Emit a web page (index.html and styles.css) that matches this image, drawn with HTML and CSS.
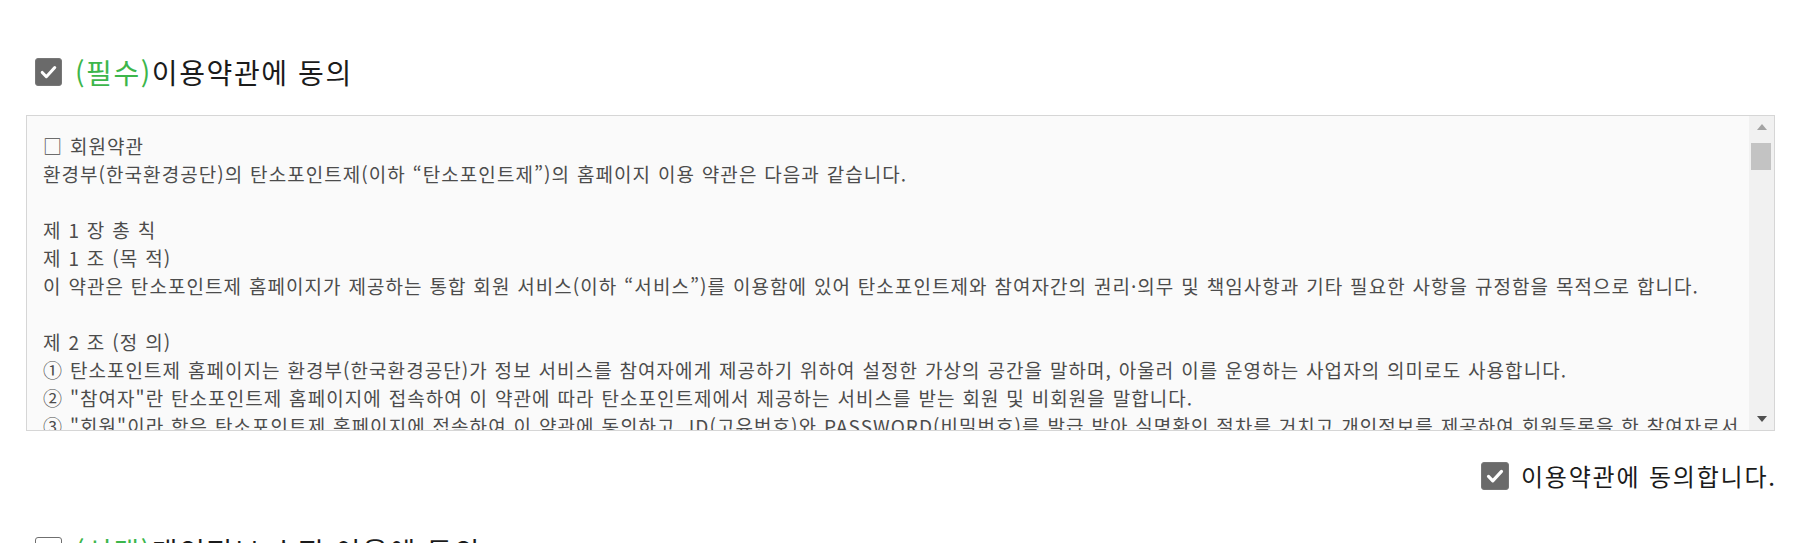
FILE: index.html
```html
<!DOCTYPE html>
<html lang="ko">
<head>
<meta charset="utf-8">
<title>이용약관 동의</title>
<link rel="stylesheet" href="styles.css">
</head>
<body>
  <section class="terms-section">
    <h3 class="agree-title">
      <span class="check is-checked">
        <svg viewBox="0 0 28 28" aria-hidden="true"><path d="M7 14.5l4.6 4.8L21 9"/></svg>
      </span>
      <span><em class="req">(필수)</em>이용약관에 동의</span>
    </h3>
    <div class="terms-box">
      <div class="terms-text">
        <p>□ 회원약관</p>
        <p>환경부(한국환경공단)의 탄소포인트제(이하 “탄소포인트제”)의 홈페이지 이용 약관은 다음과 같습니다.</p>
        <p class="blank"></p>
        <p>제 1 장 총 칙</p>
        <p>제 1 조 (목 적)</p>
        <p>이 약관은 탄소포인트제 홈페이지가 제공하는 통합 회원 서비스(이하 “서비스”)를 이용함에 있어 탄소포인트제와 참여자간의 권리·의무 및 책임사항과 기타 필요한 사항을 규정함을 목적으로 합니다.</p>
        <p class="blank"></p>
        <p>제 2 조 (정 의)</p>
        <p>① 탄소포인트제 홈페이지는 환경부(한국환경공단)가 정보 서비스를 참여자에게 제공하기 위하여 설정한 가상의 공간을 말하며, 아울러 이를 운영하는 사업자의 의미로도 사용합니다.</p>
        <p>② "참여자"란 탄소포인트제 홈페이지에 접속하여 이 약관에 따라 탄소포인트제에서 제공하는 서비스를 받는 회원 및 비회원을 말합니다.</p>
        <p class="nowrap">③ "회원"이라 함은 탄소포인트제 홈페이지에 접속하여 이 약관에 동의하고, ID(고유번호)와 PASSWORD(비밀번호)를 발급 받아 실명확인 절차를 거치고 개인정보를 제공하여 회원등록을 한 참여자로서</p>
        <p>④ "비회원"이라 함은 회원에 가입하지 않고 탄소포인트제에서 제공하는 서비스를 이용하는 자를 말합니다.</p>
      </div>
      <div class="scrollbar" aria-hidden="true">
        <span class="arrow up"></span>
        <span class="track"><span class="thumb"></span></span>
        <span class="arrow down"></span>
      </div>
    </div>
    <label class="agree-check">
      <span class="check is-checked">
        <svg viewBox="0 0 28 28" aria-hidden="true"><path d="M7 14.5l4.6 4.8L21 9"/></svg>
      </span>
      <span class="agree-label">이용약관에 동의합니다.</span>
    </label>
  </section>

  <section class="terms-section">
    <h3 class="agree-title">
      <span class="check"></span>
      <span><em class="req">(선택)</em>개인정보 수집·이용에 동의</span>
    </h3>
  </section>
</body>
</html>
```

FILE: styles.css
```css
html, body {
  margin: 0;
  padding: 0;
  background: #ffffff;
}

body {
  font-family: "Noto Sans CJK KR", "Noto Sans", sans-serif;
  color: #222222;
  overflow: hidden;
  height: 543px;
}

.terms-section {
  padding: 0 42px 0 26px;
}

.terms-section:first-child {
  padding-top: 57px;
}

.terms-section + .terms-section {
  margin-top: 46px;
}

/* section heading with checkbox */
.agree-title {
  display: flex;
  align-items: center;
  gap: 13px;
  height: 30px;
  margin: 0;
  padding-left: 9px;
  font-size: 28px;
  font-weight: 400;
  line-height: 30px;
  letter-spacing: 1.6px;
  color: #1b1b1b;
}

.req {
  font-style: normal;
  color: #3cb64b;
}

/* checkbox */
.check {
  flex: none;
  display: flex;
  align-items: center;
  justify-content: center;
  width: 27px;
  height: 28px;
  box-sizing: border-box;
  border: 1px solid #6f6f6f;
  border-radius: 3px;
  background: #ffffff;
}

.check.is-checked {
  background: #6a6a6a;
  border-color: #777777;
}

.check svg {
  width: 26px;
  height: 26px;
}

.check svg path {
  fill: none;
  stroke: #ffffff;
  stroke-width: 3.4;
  stroke-linecap: round;
  stroke-linejoin: round;
}

/* scrollable terms box */
.terms-box {
  display: flex;
  height: 316px;
  margin-top: 28px;
  box-sizing: border-box;
  border: 1px solid #d6d6d6;
  background: #fafafa;
  overflow: hidden;
}

.terms-text {
  flex: 1;
  min-width: 0;
  padding: 16px 12px 0 16px;
  font-size: 19px;
  line-height: 28px;
  color: #4c4c4c;
  letter-spacing: 1.05px;
  word-spacing: 0.5px;
  overflow: hidden;
}

.terms-text p {
  margin: 0;
}

.terms-text .nowrap {
  white-space: nowrap;
}

.terms-text .blank {
  height: 28px;
}

/* classic scrollbar */
.scrollbar {
  flex: none;
  display: flex;
  flex-direction: column;
  width: 25px;
  background: #f1f1f1;
}

.arrow {
  flex: none;
  height: 22px;
  display: flex;
  align-items: center;
  justify-content: center;
}

.arrow::before {
  content: "";
  width: 0;
  height: 0;
  border-left: 5px solid transparent;
  border-right: 5px solid transparent;
}

.arrow.up::before {
  border-bottom: 6px solid #a3a3a3;
}

.arrow.down::before {
  border-top: 6px solid #505050;
}

.track {
  flex: 1;
  padding: 5px 3px 0 2px;
}

.thumb {
  display: block;
  height: 27px;
  background: #c3c3c3;
}

/* agree checkbox row under the box */
.agree-check {
  display: flex;
  align-items: center;
  justify-content: flex-end;
  gap: 12px;
  height: 28px;
  margin-top: 31px;
  font-size: 24px;
  line-height: 28px;
  color: #1b1b1b;
}

.agree-label {
  letter-spacing: 1.8px;
  margin-right: -1.8px;
}

.agree-check .check {
  width: 28px;
}
```
